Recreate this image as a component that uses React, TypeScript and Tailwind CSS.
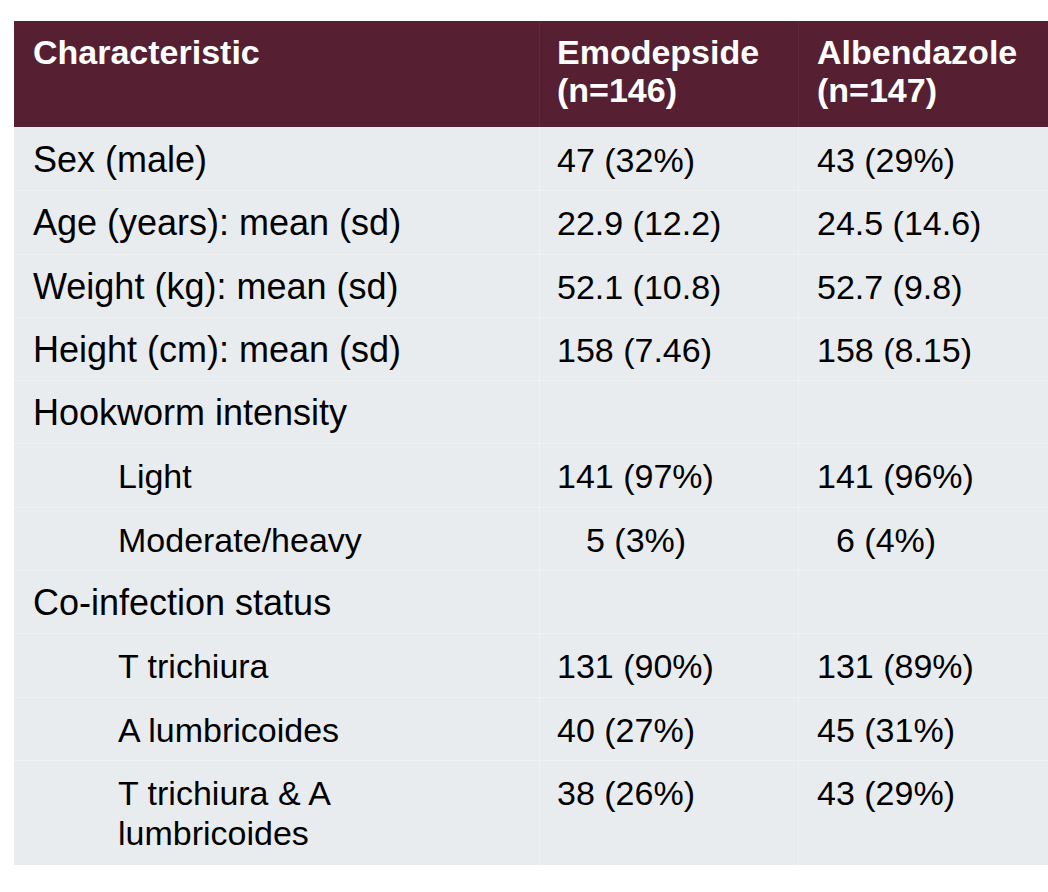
const rows: { label: string; emo: string; alb: string; indent?: boolean; tall?: boolean; center?: boolean }[] = [
  { label: "Sex (male)", emo: "47 (32%)", alb: "43 (29%)" },
  { label: "Age (years): mean (sd)", emo: "22.9 (12.2)", alb: "24.5 (14.6)" },
  { label: "Weight (kg): mean (sd)", emo: "52.1 (10.8)", alb: "52.7 (9.8)" },
  { label: "Height (cm): mean (sd)", emo: "158 (7.46)", alb: "158 (8.15)" },
  { label: "Hookworm intensity", emo: "", alb: "" },
  { label: "Light", emo: "141 (97%)", alb: "141 (96%)", indent: true },
  { label: "Moderate/heavy", emo: "5 (3%)", alb: "6 (4%)", indent: true, center: true },
  { label: "Co-infection status", emo: "", alb: "" },
  { label: "T trichiura", emo: "131 (90%)", alb: "131 (89%)", indent: true },
  { label: "A lumbricoides", emo: "40 (27%)", alb: "45 (31%)", indent: true },
  { label: "T trichiura & A lumbricoides", emo: "38 (26%)", alb: "43 (29%)", indent: true, tall: true },
];

export default function App() {
  return (
    <div className="w-[1048px] h-[892px] bg-white pt-[21px] pl-[14px] font-['Liberation_Sans',Arial,sans-serif] text-black">
      <div className="grid grid-cols-[525px_259px_250px]">
        {/* Header */}
        <div className="bg-[#561f32] h-[106px] pl-[19px] pt-[12px] text-white font-bold text-[34px] leading-[38px]">
          Characteristic
        </div>
        <div className="bg-[#561f32] h-[106px] pl-[17px] pt-[12px] text-white font-bold text-[34px] leading-[38px] border-l border-[#5e2a3b]">
          Emodepside
          <br />
          (n=146)
        </div>
        <div className="bg-[#561f32] h-[106px] pl-[18px] pt-[12px] text-white font-bold text-[34px] leading-[38px] border-l border-[#5e2a3b]">
          Albendazole
          <br />
          (n=147)
        </div>

        {/* Body */}
        {rows.map((r, i) => (
          <div key={i} className="contents">
            <div
              className={
                "bg-[#e9ecee] leading-[40px] pt-[12px] border-t border-[#eff1f2] " +
                (r.tall ? "h-[105px] pr-[180px] " : "h-[63.3px] ") +
                (r.indent ? "pl-[104px] text-[34px]" : "pl-[19px] text-[36px]")
              }
            >
              {r.label}
            </div>
            <div
              className={
                "bg-[#e9ecee] text-[34px] leading-[40px] pt-[12px] border-t border-l border-[#eff1f2] " +
                (r.tall ? "h-[105px] " : "h-[63.3px] ") +
                (r.center ? "pl-[46px]" : "pl-[17px]")
              }
            >
              {r.emo}
            </div>
            <div
              className={
                "bg-[#e9ecee] text-[34px] leading-[40px] pt-[12px] border-t border-l border-[#eff1f2] " +
                (r.tall ? "h-[105px] " : "h-[63.3px] ") +
                (r.center ? "pl-[37px]" : "pl-[18px]")
              }
            >
              {r.alb}
            </div>
          </div>
        ))}
      </div>
    </div>
  );
}
